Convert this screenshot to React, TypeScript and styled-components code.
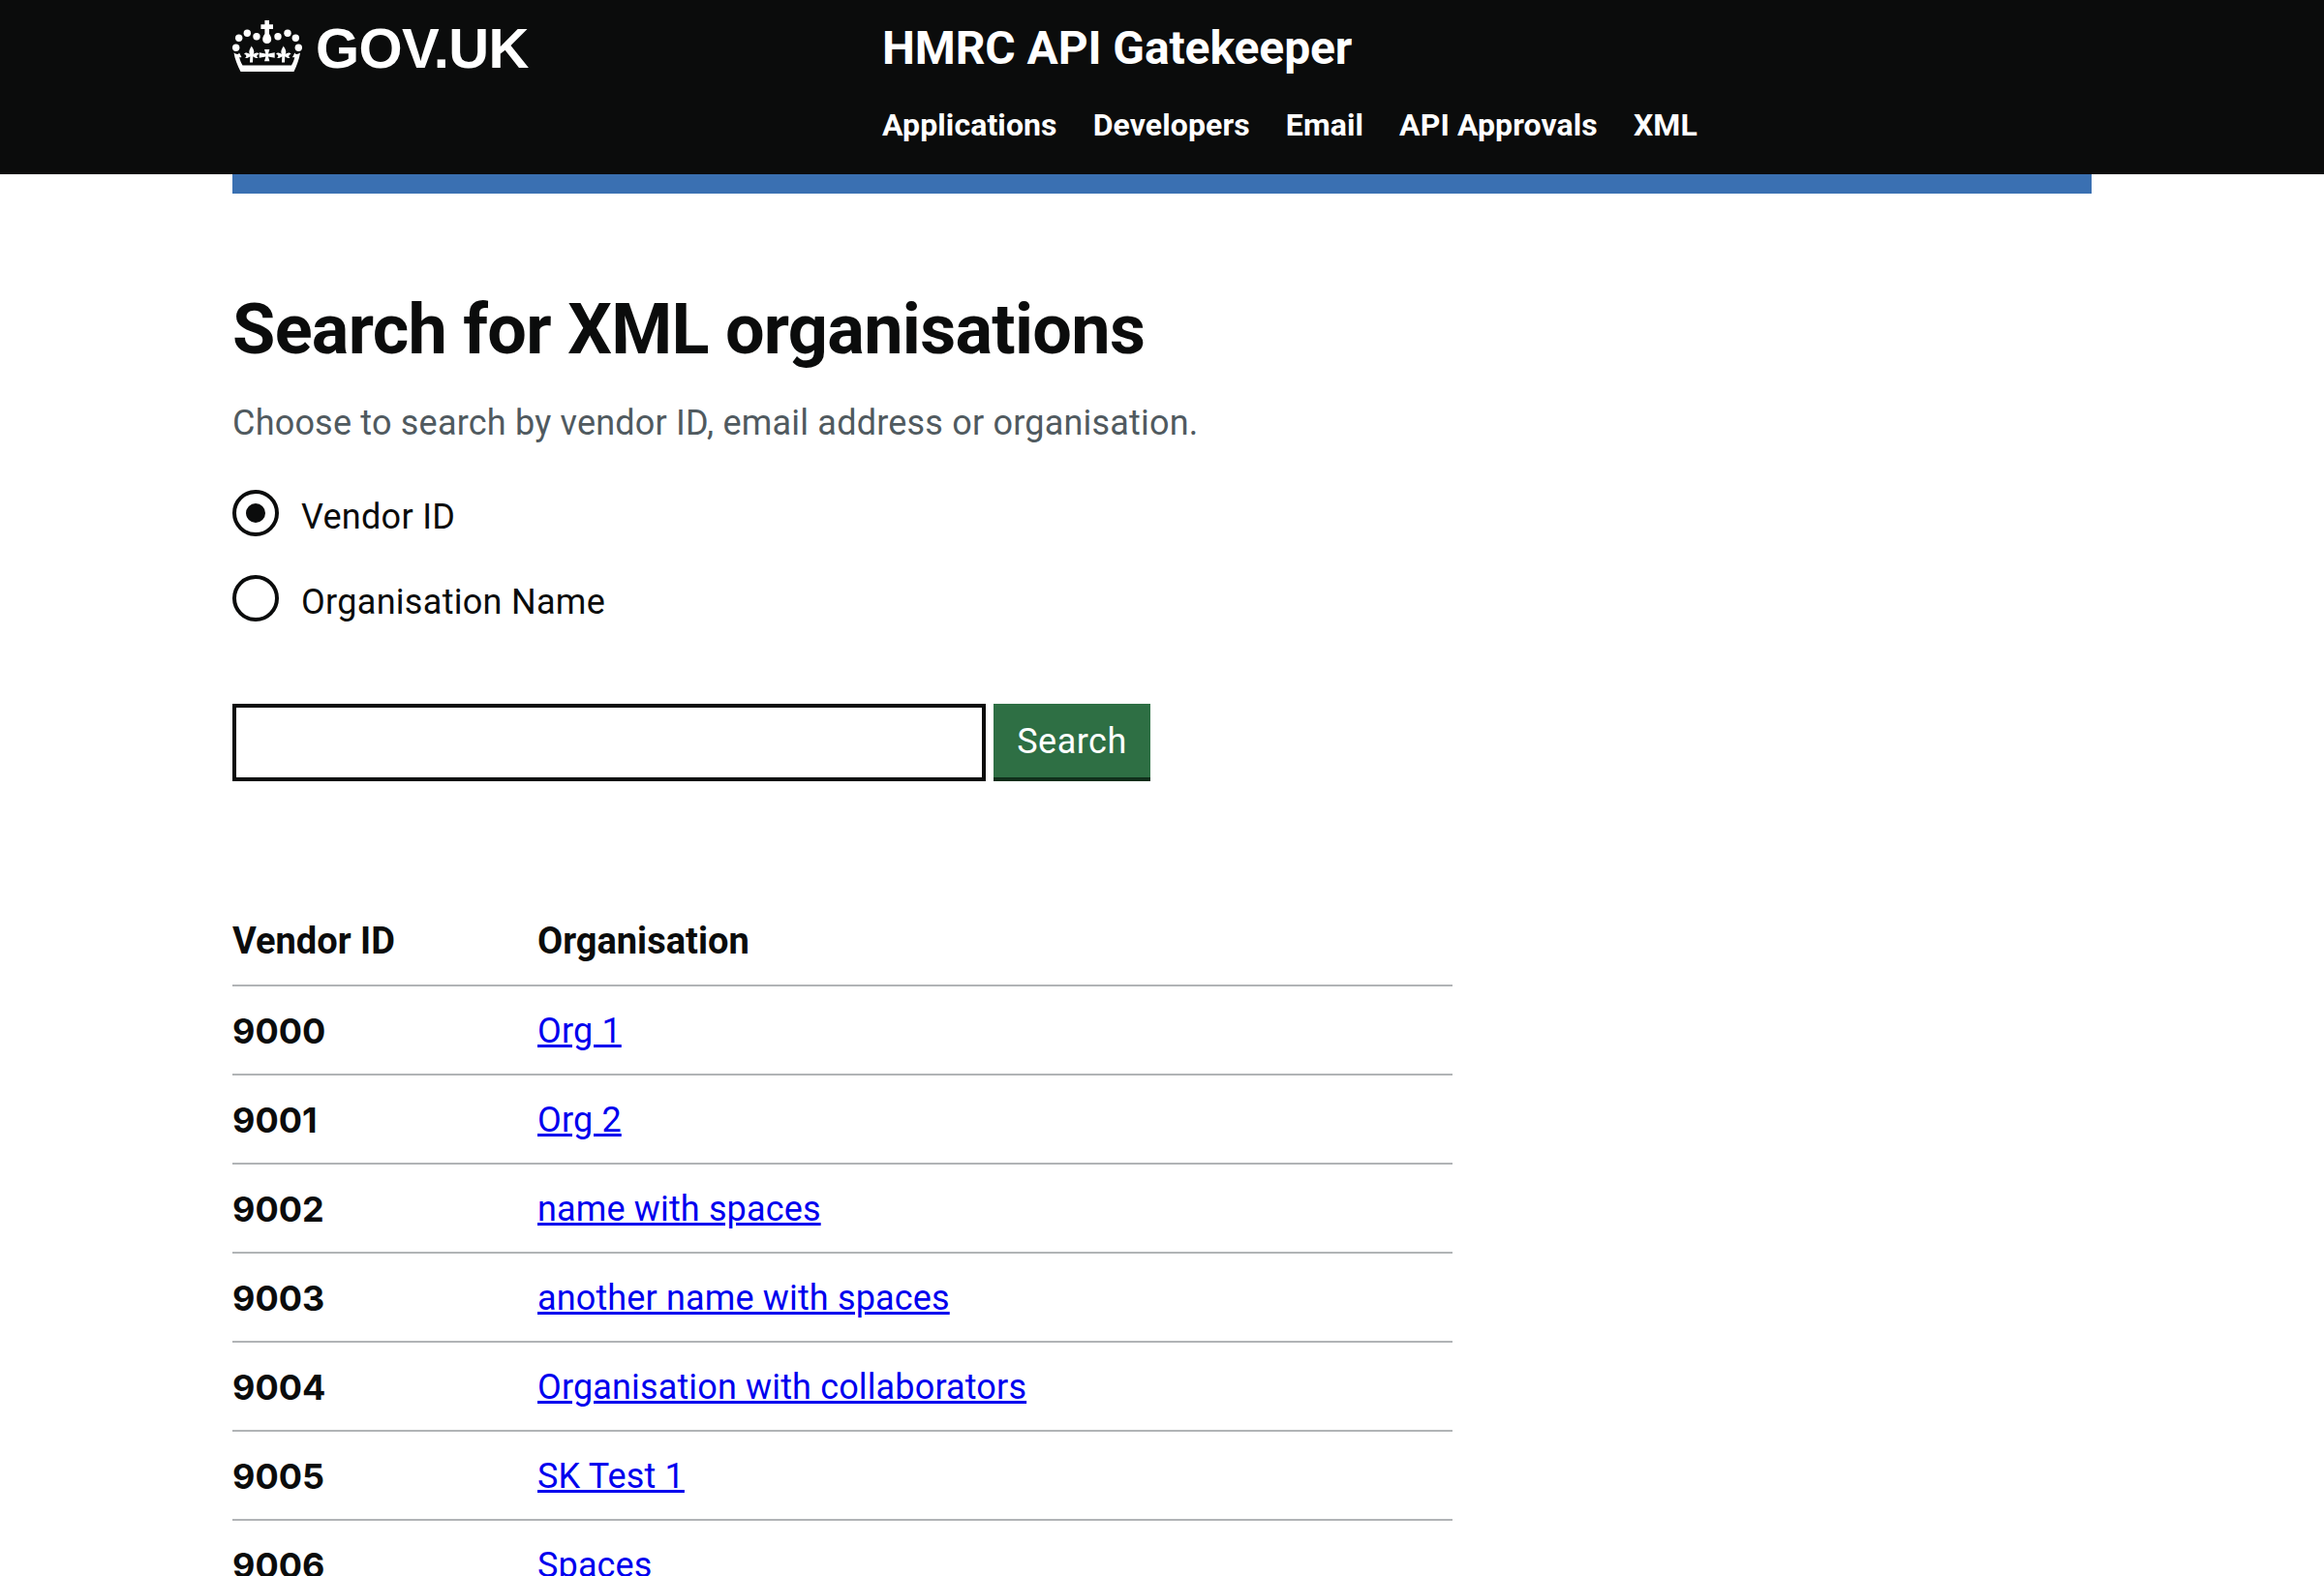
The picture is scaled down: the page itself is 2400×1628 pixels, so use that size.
import { createGlobalStyle, styled } from 'styled-components';

const GlobalStyle = createGlobalStyle`
  html, body {
    margin: 0;
    padding: 0;
    background: #fff;
    overflow: hidden;
  }
  body {
    font-family: Roboto, "Liberation Sans", sans-serif;
    color: #0b0c0c;
  }
`;

const Page = styled.div`
  height: 1628px;
  overflow: hidden;
`;

const HeaderBar = styled.header`
  background: #0b0c0c;
  height: 180px;
  box-sizing: border-box;
`;

const HeaderInner = styled.div`
  width: 1920px;
  margin: 0 auto;
  display: flex;
`;

const Logo = styled.a`
  width: 671px;
  display: flex;
  align-items: flex-start;
  gap: 14px;
  padding-top: 21px;
  color: #fff;
  font-family: "Liberation Sans", Arial, sans-serif;
  font-weight: 700;
  font-size: 58px;
  line-height: 58px;
`;

const LogoText = styled.span`
  letter-spacing: -0.6px;
`;

const ServiceColumn = styled.div`
  display: flex;
  flex-direction: column;
  padding-top: 21px;
`;

const ServiceName = styled.div`
  color: #fff;
  font-weight: 700;
  font-size: 48px;
  line-height: 58px;
  letter-spacing: -0.1px;
`;

const Nav = styled.nav`
  display: flex;
  gap: 37px;
  margin-top: 30px;
`;

const NavLink = styled.a`
  color: #fff;
  font-weight: 700;
  font-size: 32px;
  line-height: 40px;
  letter-spacing: 0.1px;
`;

const Container = styled.main`
  width: 1920px;
  margin: 0 auto;
`;

const BlueBar = styled.div`
  height: 20px;
  background: #3a70b2;
`;

const Title = styled.h1`
  margin: 101px 0 0;
  font-size: 72px;
  line-height: 80px;
  font-weight: 700;
  letter-spacing: -0.7px;
`;

const Lede = styled.p`
  margin: 31px 0 0;
  font-size: 36px;
  line-height: 50px;
  color: #505a5f;
  letter-spacing: 0.2px;
`;

const RadioGroup = styled.div`
  margin-top: 44px;
  display: flex;
  flex-direction: column;
  gap: 40px;
`;

const RadioRow = styled.label`
  display: flex;
  align-items: center;
  gap: 23px;
  height: 48px;
  font-size: 36px;
  letter-spacing: 0.3px;
`;

const RadioText = styled.span`
  padding-top: 7px;
`;

const RadioMark = styled.span<{ $checked?: boolean }>`
  width: 48px;
  height: 48px;
  box-sizing: border-box;
  border: 4px solid #0b0c0c;
  border-radius: 50%;
  display: flex;
  align-items: center;
  justify-content: center;
  &::after {
    content: '';
    display: ${(p) => (p.$checked ? 'block' : 'none')};
    width: 20px;
    height: 20px;
    border-radius: 50%;
    background: #0b0c0c;
  }
`;

const SearchRow = styled.form`
  margin-top: 85px;
  display: flex;
  gap: 8px;
`;

const SearchInput = styled.input`
  width: 778px;
  height: 80px;
  box-sizing: border-box;
  border: 4px solid #0b0c0c;
  border-radius: 0;
  padding: 0 10px;
  font-size: 36px;
  outline: none;
`;

const SearchButton = styled.button`
  width: 162px;
  height: 80px;
  box-sizing: border-box;
  border: 0;
  border-bottom: 4px solid #0f2e1a;
  border-radius: 0;
  background: #2e6f44;
  color: #fff;
  font-family: inherit;
  font-size: 36px;
  letter-spacing: 0.5px;
  padding: 2px 0 0;
`;

const ResultsTable = styled.table`
  margin-top: 120px;
  width: 1260px;
  border-collapse: collapse;
  table-layout: fixed;
`;

const HeadCell = styled.th`
  text-align: left;
  padding: 0;
  height: 90px;
  border-bottom: 2px solid #b1b4b6;
  font-size: 38px;
  font-weight: 700;
  &:first-child {
    width: 315px;
  }
`;

const IdCell = styled.td`
  padding: 2px 0 0;
  height: 88px;
  border-bottom: 2px solid #b1b4b6;
  font-family: Inter, "Liberation Sans", sans-serif;
  font-size: 36px;
  font-weight: 700;
`;

const NameCell = styled.td`
  padding: 2px 0 0;
  height: 88px;
  border-bottom: 2px solid #b1b4b6;
  font-size: 36px;
  letter-spacing: 0.15px;
`;

const OrgLink = styled.a`
  color: #0000ee;
  text-decoration: underline;
`;

const fleur =
  'M0 0c1.8 2.2 2.8 4.2 2.8 6.2 0 1-.3 1.8-.8 2.6 1.2-1 2.4-1.8 3.8-1.8 1 0 1.8.6 2.2 1.4-1.2 0-2.2.7-2.2 2 0 1 .8 1.6 1.6 2-2 .6-4-.2-5.6-1.6L1.5 17h-3l.3-6.2c-1.600 1.400-3.600 2.200-5.600 1.600.8-.4 1.600-1 1.600-2 0-1.300-1-2-2.200-2 .4-.8 1.200-1.400 2.200-1.400 1.400 0 2.600.8 3.800 1.800-.5-.8-.8-1.600-.8-2.600 0-2 1-4 2.800-6.200z';

const Crown = () => (
  <svg width="72" height="53" viewBox="0 0 72 53" fill="#fff" aria-hidden="true">
    <path d="M33.400 0h4.600v4.300h4v4.800h-4v5c1.500 2.300 2.200 4 2.200 5.600 0 2.500-1.800 4.300-4.500 4.300s-4.500-1.800-4.500-4.300c0-1.600.7-3.300 2.200-5.600v-5h-4V4.300h4z" />
    <circle cx="15.300" cy="13.300" r="3.700" />
    <circle cx="25" cy="16.700" r="3.700" />
    <circle cx="6.700" cy="18.300" r="3.700" />
    <circle cx="3.700" cy="28.300" r="3.700" />
    <circle cx="47" cy="16.700" r="3.700" />
    <circle cx="57" cy="13.300" r="3.700" />
    <circle cx="65.300" cy="18.300" r="3.700" />
    <circle cx="68.300" cy="28.300" r="3.700" />
    <path d="M33 30h5.400L37 34.600l6.700-1.300v5.400L37 37.400l1.400 4.900H33l1.400-4.900-6.700 1.300v-5.400l6.700 1.300z" />
    <path transform="translate(19.500 26.500)" d={fleur} />
    <path transform="translate(52.500 26.500)" d={fleur} />
    <path d="M1.500 33.500c1.500 1 3 1.500 4.500 1.500l1-1.500 2.500 4.500c-.8.3-1.500.3-2.300 0 .6 3 1.800 6 3.300 8.500H61c1.500-2.500 2.700-5.500 3.300-8.500-.8.3-1.500.3-2.300 0l2.500-4.500 1 1.500c1.500 0 3-.5 4.500-1.500-1 6.500-3.500 13-6.500 19.500H8.500C5.300 46.500 2.500 40 1.500 33.500z" />
  </svg>
);

const rows = [
  ['9000', 'Org 1'],
  ['9001', 'Org 2'],
  ['9002', 'name with spaces'],
  ['9003', 'another name with spaces'],
  ['9004', 'Organisation with collaborators'],
  ['9005', 'SK Test 1'],
  ['9006', 'Spaces'],
];

const navItems = ['Applications', 'Developers', 'Email', 'API Approvals', 'XML'];

export default function App() {
  return (
    <Page>
      <GlobalStyle />
      <HeaderBar>
        <HeaderInner>
          <Logo>
            <Crown />
            <LogoText>GOV.UK</LogoText>
          </Logo>
          <ServiceColumn>
            <ServiceName>HMRC API Gatekeeper</ServiceName>
            <Nav>
              {navItems.map((item) => (
                <NavLink key={item}>{item}</NavLink>
              ))}
            </Nav>
          </ServiceColumn>
        </HeaderInner>
      </HeaderBar>
      <Container>
        <BlueBar />
        <Title>Search for XML organisations</Title>
        <Lede>Choose to search by vendor ID, email address or organisation.</Lede>
        <RadioGroup>
          <RadioRow>
            <RadioMark $checked />
            <RadioText>Vendor ID</RadioText>
          </RadioRow>
          <RadioRow>
            <RadioMark />
            <RadioText>Organisation Name</RadioText>
          </RadioRow>
        </RadioGroup>
        <SearchRow>
          <SearchInput />
          <SearchButton type="button">Search</SearchButton>
        </SearchRow>
        <ResultsTable>
          <thead>
            <tr>
              <HeadCell>Vendor ID</HeadCell>
              <HeadCell>Organisation</HeadCell>
            </tr>
          </thead>
          <tbody>
            {rows.map(([id, name]) => (
              <tr key={id}>
                <IdCell>{id}</IdCell>
                <NameCell>
                  <OrgLink href="#">{name}</OrgLink>
                </NameCell>
              </tr>
            ))}
          </tbody>
        </ResultsTable>
      </Container>
    </Page>
  );
}
